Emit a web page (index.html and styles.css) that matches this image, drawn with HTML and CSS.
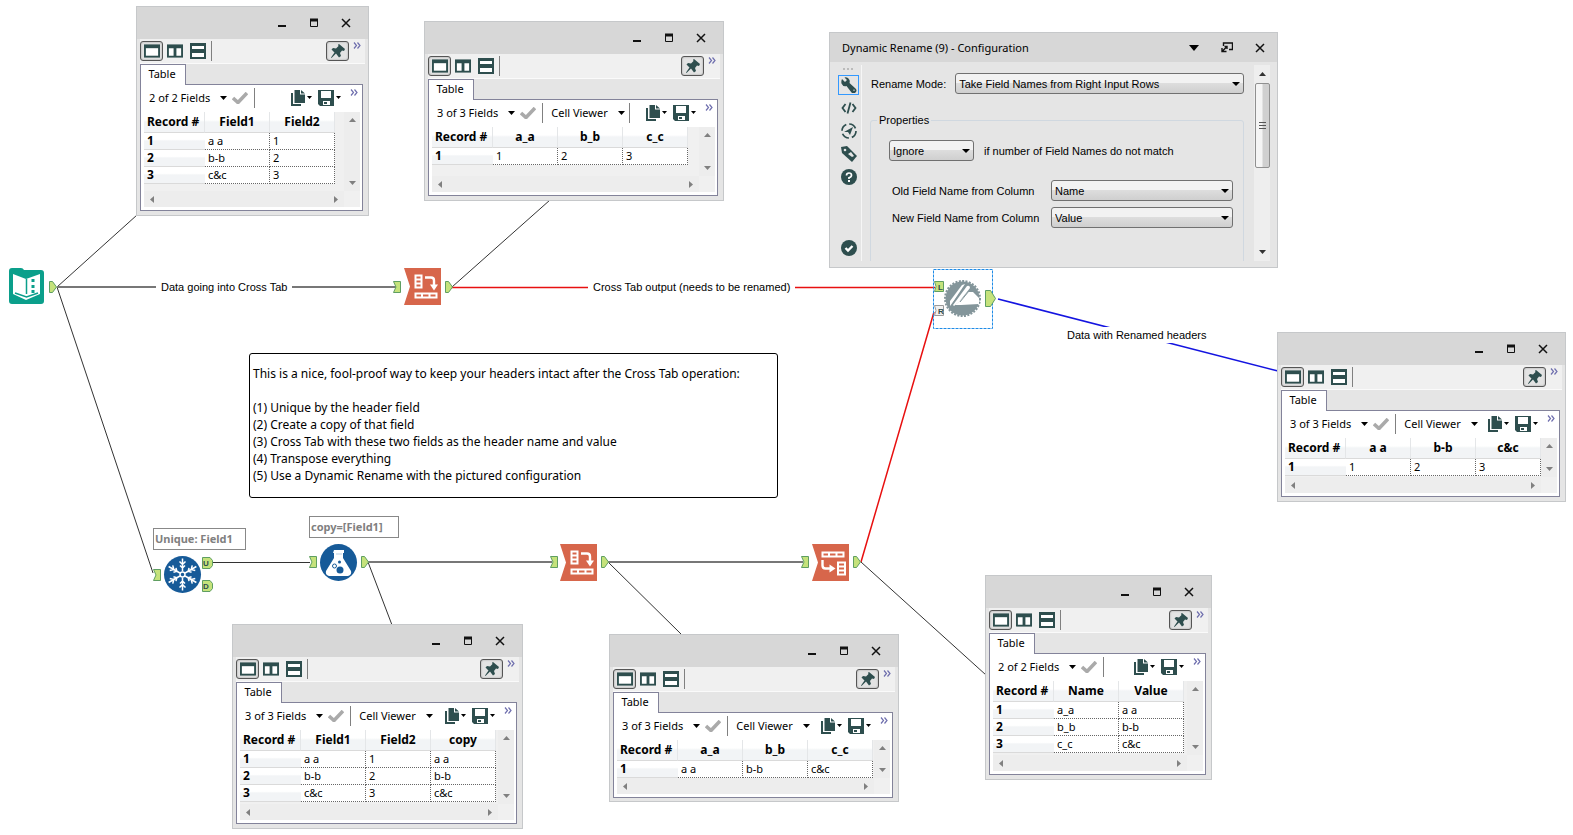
FILE: index.html
```html
<!DOCTYPE html>
<html lang="en">
<head>
    <meta charset="UTF-8">
    <meta name="viewport" content="width=device-width, initial-scale=1.0">
    <title>Dynamic Rename workflow</title>
    <link rel="stylesheet" href="styles.css">
</head>
<body>
    <!-- Shared icons -->
    <svg class="sprite" aria-hidden="true">
        <symbol id="i-min" viewBox="0 0 10 10"><path d="M1 8h8" stroke="#111" stroke-width="2"/></symbol>
        <symbol id="i-max" viewBox="0 0 10 10"><path d="M1.500 1v7.500h7V1" fill="none" stroke="#111"/><path d="M1 2h8" stroke="#111" stroke-width="3"/></symbol>
        <symbol id="i-close" viewBox="0 0 10 10"><path d="M1 1l8 8M9 1l-8 8" stroke="#111" stroke-width="1.500"/></symbol>
        <symbol id="i-single" viewBox="0 0 17 14"><path d="M0 0h17v14H0z" fill="#2e4e4e"/><path d="M2 4h13v8H2z" fill="#fff"/></symbol>
        <symbol id="i-split" viewBox="0 0 17 14"><path d="M0 0h17v14H0z" fill="#2e4e4e"/><path d="M2 4h5v8H2zM10 4h5v8h-5z" fill="#fff"/></symbol>
        <symbol id="i-stack" viewBox="0 0 16 16"><path d="M0 0h16v16H0z" fill="#2e4e4e"/><path d="M2 3h12v3H2zM2 10h12v4H2z" fill="#fff"/></symbol>
        <symbol id="i-pin" viewBox="0 0 16 16"><path d="M9 1l6 5-1 2-2-.5-2 2.500 1 3-2 1.500-3-4L1.500 15 1 14.500l3.500-5-3-3L3 5l3 .5L8.500 3 8 1.700z" fill="#2e4e4e"/></symbol>
        <symbol id="i-more" viewBox="0 0 8 7"><path d="M1 .5l2.500 3L1 6.500M4.500.5l2.500 3-2.500 3" fill="none" stroke="#6f6fae" stroke-width="1.200"/></symbol>
        <symbol id="i-caret" viewBox="0 0 7 4"><path d="M0 0h7L3.500 4z"/></symbol>
        <symbol id="i-check" viewBox="0 0 16 12"><path d="M1 6l5 4.500L15 1" fill="none" stroke="#aaa" stroke-width="3.600"/></symbol>
        <symbol id="i-copy" viewBox="0 0 14 16"><path d="M0 3h2v11h8v2H0z" fill="#2e4e4e"/><path d="M3.500 0H9v4.500h5V13H3.500zM10 0l4 3.500h-4z" fill="#2e4e4e"/></symbol>
        <symbol id="i-save" viewBox="0 0 16 16"><path d="M0 0h16v16H2l-2-2z" fill="#2e4e4e"/><path d="M3 1h10v7H3zM5 11h7v4H5z" fill="#fff"/><path d="M6 12h3v2H6z" fill="#2e4e4e"/></symbol>
        <symbol id="i-up" viewBox="0 0 7 4"><path d="M0 4h7L3.500 0z"/></symbol>
        <symbol id="i-left" viewBox="0 0 4 7"><path d="M4 0v7L0 3.500z"/></symbol>
        <symbol id="i-right" viewBox="0 0 4 7"><path d="M0 0v7l4-3.500z"/></symbol>

        <symbol id="port-in" viewBox="0 0 8 12"><path d="M.5.5h7v11h-7L3 6z" fill="#c5e27b" stroke="#5f9e62"/></symbol>
        <symbol id="port-out" viewBox="0 0 8 12"><path d="M.5.5h3L7.500 6l-4 5.500h-3z" fill="#c5e27b" stroke="#5f9e62"/></symbol>
        <symbol id="port-tag" viewBox="0 0 11 12"><path d="M.5.5H8L10.500 3.500v5L8 11.500H.5z" fill="#c5e27b" stroke="#5f9e62"/></symbol>
        <symbol id="tool-crosstab" viewBox="0 0 37 37">
            <path d="M0 0h37v37H0l6-18.500z" fill="#d7664b"/>
            <path d="M11.500 7.500h6v12h-6zM11.500 11.500h6M11.500 15.500h6M11.500 25.500h21v4h-21zM18 25.500v4M25.500 25.500v4" fill="none" stroke="#fff" stroke-width="2"/>
            <path d="M21 9.500h6q3 0 3 3V17" fill="none" stroke="#fff" stroke-width="2.400"/><path d="M26 16.500h8L30 22.500z" fill="#fff"/>
        </symbol>
        <symbol id="tool-transpose" viewBox="0 0 37 37">
            <path d="M0 0h37v37H0l6-18.500z" fill="#d7664b"/>
            <path d="M10.500 8.500h21v4h-21zM17 8.500v4M24.500 8.500v4M26 18.500h7v12h-7zM26 22.500h7M26 26.500h7" fill="none" stroke="#fff" stroke-width="2"/>
            <path d="M10.500 16v5.500q0 3 3 3H18" fill="none" stroke="#fff" stroke-width="2.400"/><path d="M17.500 20.500v8l6-4z" fill="#fff"/>
        </symbol>
    </svg>

    <main class="canvas">
        <svg class="flow" role="img" aria-label="Workflow connections and tools">
            <g class="wire">
                <path d="M57 287L137 215M57 287l96 286M452 287l98-87M368 562l24 63M608 562l73 72M861 562l125 113"/>
                <path class="thick" d="M57 287h340M368 562h184M608 562h195"/>
                <path class="plain" d="M211 562.500h99"/>
                <path class="red" d="M452 287.500h483M861 562l73-250"/>
                <path class="blue" d="M998 299l280 72"/>
            </g>

            <!-- Input data -->
            <path d="M9 271q0-3 3-3h9q2 0 3 2h17q3 0 3 3v28q0 3-3 3H12q-3 0-3-3z" fill="#0b9f8b"/>
            <path d="M13 274l13 5 14-5v20l-14 6-13-6z" fill="#fff"/>
            <path d="M26.500 279v15M15 293l11.500 4L38 293" fill="none" stroke="#0b9f8b" stroke-width="1.500"/>
            <path d="M33 279v3M33 285v3M33 290v3" stroke="#0b9f8b" stroke-width="3"/>
            <use href="#port-out" x="49" y="281" width="8" height="12"/>

            <use href="#port-in" x="393" y="281" width="8" height="12"/>
            <use href="#tool-crosstab" x="404" y="268" width="37" height="37"/>
            <use href="#port-out" x="445" y="281" width="8" height="12"/>

            <!-- Unique -->
            <use href="#port-in" x="153" y="569" width="8" height="12"/>
            <circle cx="182.500" cy="574.500" r="18.500" fill="#165a98"/>
            <g transform="translate(182.500 574.500)" fill="none" stroke="#fff" stroke-width="1.500">
                <g id="arm"><path d="M0-3v-13M-3-13L0-10l3-3M-2.500-9L0-6.500 2.500-9"/></g>
                <use href="#arm" transform="rotate(60)"/>
                <use href="#arm" transform="rotate(120)"/>
                <use href="#arm" transform="rotate(180)"/>
                <use href="#arm" transform="rotate(240)"/>
                <use href="#arm" transform="rotate(300)"/>
                <circle r="2.500"/>
            </g>
            <use href="#port-tag" x="202" y="557" width="11" height="12"/>
            <use href="#port-tag" x="202" y="580" width="11" height="12"/>
            <text x="203" y="566">U</text>
            <text x="203" y="589">D</text>

            <!-- Formula -->
            <use href="#port-in" x="309" y="556" width="8" height="12"/>
            <circle cx="338.500" cy="562.500" r="18.500" fill="#165a98"/>
            <path d="M334 550h10v3h-1v5l8 13q1 4-3 5h-19q-4-1-3-5l8-13v-5h-1z" fill="#fff"/>
            <path d="M336 554h6" stroke="#b9cfe2" stroke-width="1"/>
            <circle cx="340" cy="570" r="3.500" fill="#165a98"/>
            <circle cx="334.500" cy="566" r="2" fill="#fff" stroke="#165a98"/>
            <circle cx="339.500" cy="562" r="1.500" fill="#165a98"/>
            <use href="#port-out" x="361" y="556" width="8" height="12"/>

            <use href="#port-in" x="550" y="556" width="8" height="12"/>
            <use href="#tool-crosstab" x="560" y="544" width="37" height="37"/>
            <use href="#port-out" x="601" y="556" width="8" height="12"/>

            <use href="#port-in" x="801" y="556" width="8" height="12"/>
            <use href="#tool-transpose" x="812" y="544" width="37" height="37"/>
            <use href="#port-out" x="853" y="556" width="8" height="12"/>

            <!-- Dynamic rename, selected -->
            <rect x="933.500" y="269.500" width="59" height="59" fill="none" stroke="#1e8be6" stroke-dasharray="3 1"/>
            <path d="M934.500 281.500h9v10h-9q3-5 0-10z" fill="#c5e27b" stroke="#5f9e62"/>
            <path d="M934.500 305.500h9v10h-9q3-5 0-10z" fill="#f0f0f0" stroke="#999"/>
            <text x="938" y="290">L</text>
            <text x="938" y="314">R</text>
            <circle cx="962.500" cy="298.500" r="17" fill="#83959a"/>
            <circle cx="962.500" cy="298.500" r="17.500" fill="none" stroke="#83959a" stroke-width="2" stroke-dasharray="2 1.400"/>
            <path d="M968 292h5l6 6v6l-18 1h-6l6-5z" fill="#fff"/>
            <path d="M950 301l12-16 3-1-12 18-3 4z" fill="#fff"/>
            <path d="M953 305l14-19q3-1 3 2l-11 14-5 4z" fill="#fff"/>
            <path d="M953 303l13-18M960 302l9-11" stroke="#83959a" fill="none"/>
            <path d="M985.500 290.500h5l5 8-5 8h-5z" fill="#c5e27b" stroke="#5f9e62"/>
        </svg>

        <p class="wire-label label-crosstab">Data going into Cross Tab</p>
        <p class="wire-label label-output">Cross Tab output (needs to be renamed)</p>
        <p class="wire-label label-renamed">Data with Renamed headers</p>
        <p class="annotation note-unique">Unique: Field1</p>
        <p class="annotation note-copy">copy=[Field1]</p>

        <section class="comment">
            <p>This is a nice, fool-proof way to keep your headers intact after the Cross Tab operation:</p>
            <ul>
                <li>(1) Unique by the header field</li>
                <li>(2) Create a copy of that field</li>
                <li>(3) Cross Tab with these two fields as the header name and value</li>
                <li>(4) Transpose everything</li>
                <li>(5) Use a Dynamic Rename with the pictured configuration</li>
            </ul>
        </section>

        <!-- Source data -->
        <section class="window win-source">
            <header class="titlebar">
                <button aria-label="Minimize"><svg><use href="#i-min"/></svg></button>
                <button aria-label="Maximize"><svg><use href="#i-max"/></svg></button>
                <button aria-label="Close"><svg><use href="#i-close"/></svg></button>
            </header>
            <div class="toolbar">
                <button class="pressed" aria-label="Single"><svg><use href="#i-single"/></svg></button>
                <button aria-label="Side by side"><svg><use href="#i-split"/></svg></button>
                <button aria-label="Stacked"><svg><use href="#i-stack"/></svg></button>
                <span class="sep"></span>
                <button class="pressed pin" aria-label="Pin"><svg><use href="#i-pin"/></svg></button>
                <button class="more" aria-label="More"><svg><use href="#i-more"/></svg></button>
            </div>
            <button class="tab">Table</button>
            <div class="panel">
                <div class="fieldbar">
                    <button class="drop">2 of 2 Fields <svg class="caret"><use href="#i-caret"/></svg></button>
                    <svg class="check"><use href="#i-check"/></svg>
                    <span class="sep"></span>
                    <button class="copy" aria-label="Copy"><svg><use href="#i-copy"/></svg><svg class="mini"><use href="#i-caret"/></svg></button>
                    <button class="save" aria-label="Save"><svg><use href="#i-save"/></svg><svg class="mini"><use href="#i-caret"/></svg></button>
                    <button class="more" aria-label="More"><svg><use href="#i-more"/></svg></button>
                </div>
                <div class="grid">
                    <div class="sheet">
                        <table>
                            <tr><th>Record #</th><th>Field1</th><th>Field2</th></tr>
                            <tr><th>1</th><td>a a</td><td>1</td></tr>
                            <tr><th>2</th><td>b-b</td><td>2</td></tr>
                            <tr><th>3</th><td>c&amp;c</td><td>3</td></tr>
                        </table>
                    </div>
                    <div class="vscroll"><svg><use href="#i-up"/></svg><svg><use href="#i-caret"/></svg></div>
                    <div class="hscroll"><svg><use href="#i-left"/></svg><svg><use href="#i-right"/></svg></div>
                </div>
            </div>
        </section>

        <!-- Cross tab result -->
        <section class="window win-crosstab">
            <header class="titlebar">
                <button aria-label="Minimize"><svg><use href="#i-min"/></svg></button>
                <button aria-label="Maximize"><svg><use href="#i-max"/></svg></button>
                <button aria-label="Close"><svg><use href="#i-close"/></svg></button>
            </header>
            <div class="toolbar">
                <button class="pressed" aria-label="Single"><svg><use href="#i-single"/></svg></button>
                <button aria-label="Side by side"><svg><use href="#i-split"/></svg></button>
                <button aria-label="Stacked"><svg><use href="#i-stack"/></svg></button>
                <span class="sep"></span>
                <button class="pressed pin" aria-label="Pin"><svg><use href="#i-pin"/></svg></button>
                <button class="more" aria-label="More"><svg><use href="#i-more"/></svg></button>
            </div>
            <button class="tab">Table</button>
            <div class="panel">
                <div class="fieldbar">
                    <button class="drop">3 of 3 Fields <svg class="caret"><use href="#i-caret"/></svg></button>
                    <svg class="check"><use href="#i-check"/></svg>
                    <span class="sep"></span>
                    <button class="drop viewer">Cell Viewer <svg class="caret"><use href="#i-caret"/></svg></button>
                    <span class="sep end"></span>
                    <button class="copy" aria-label="Copy"><svg><use href="#i-copy"/></svg><svg class="mini"><use href="#i-caret"/></svg></button>
                    <button class="save" aria-label="Save"><svg><use href="#i-save"/></svg><svg class="mini"><use href="#i-caret"/></svg></button>
                    <button class="more" aria-label="More"><svg><use href="#i-more"/></svg></button>
                </div>
                <div class="grid">
                    <div class="sheet">
                        <table>
                            <tr><th>Record #</th><th>a_a</th><th>b_b</th><th>c_c</th></tr>
                            <tr><th>1</th><td>1</td><td>2</td><td>3</td></tr>
                        </table>
                    </div>
                    <div class="vscroll"><svg><use href="#i-up"/></svg><svg><use href="#i-caret"/></svg></div>
                    <div class="hscroll"><svg><use href="#i-left"/></svg><svg><use href="#i-right"/></svg></div>
                </div>
            </div>
        </section>

        <!-- Renamed result -->
        <section class="window win-renamed">
            <header class="titlebar">
                <button aria-label="Minimize"><svg><use href="#i-min"/></svg></button>
                <button aria-label="Maximize"><svg><use href="#i-max"/></svg></button>
                <button aria-label="Close"><svg><use href="#i-close"/></svg></button>
            </header>
            <div class="toolbar">
                <button class="pressed" aria-label="Single"><svg><use href="#i-single"/></svg></button>
                <button aria-label="Side by side"><svg><use href="#i-split"/></svg></button>
                <button aria-label="Stacked"><svg><use href="#i-stack"/></svg></button>
                <span class="sep"></span>
                <button class="pressed pin" aria-label="Pin"><svg><use href="#i-pin"/></svg></button>
                <button class="more" aria-label="More"><svg><use href="#i-more"/></svg></button>
            </div>
            <button class="tab">Table</button>
            <div class="panel">
                <div class="fieldbar">
                    <button class="drop">3 of 3 Fields <svg class="caret"><use href="#i-caret"/></svg></button>
                    <svg class="check"><use href="#i-check"/></svg>
                    <span class="sep"></span>
                    <button class="drop viewer">Cell Viewer <svg class="caret"><use href="#i-caret"/></svg></button>
                    <button class="copy" aria-label="Copy"><svg><use href="#i-copy"/></svg><svg class="mini"><use href="#i-caret"/></svg></button>
                    <button class="save" aria-label="Save"><svg><use href="#i-save"/></svg><svg class="mini"><use href="#i-caret"/></svg></button>
                    <button class="more" aria-label="More"><svg><use href="#i-more"/></svg></button>
                </div>
                <div class="grid">
                    <div class="sheet">
                        <table>
                            <tr><th>Record #</th><th>a a</th><th>b-b</th><th>c&amp;c</th></tr>
                            <tr><th>1</th><td>1</td><td>2</td><td>3</td></tr>
                        </table>
                    </div>
                    <div class="vscroll"><svg><use href="#i-up"/></svg><svg><use href="#i-caret"/></svg></div>
                    <div class="hscroll"><svg><use href="#i-left"/></svg><svg><use href="#i-right"/></svg></div>
                </div>
            </div>
        </section>

        <!-- Copied field -->
        <section class="window win-copy">
            <header class="titlebar">
                <button aria-label="Minimize"><svg><use href="#i-min"/></svg></button>
                <button aria-label="Maximize"><svg><use href="#i-max"/></svg></button>
                <button aria-label="Close"><svg><use href="#i-close"/></svg></button>
            </header>
            <div class="toolbar">
                <button class="pressed" aria-label="Single"><svg><use href="#i-single"/></svg></button>
                <button aria-label="Side by side"><svg><use href="#i-split"/></svg></button>
                <button aria-label="Stacked"><svg><use href="#i-stack"/></svg></button>
                <span class="sep"></span>
                <button class="pressed pin" aria-label="Pin"><svg><use href="#i-pin"/></svg></button>
                <button class="more" aria-label="More"><svg><use href="#i-more"/></svg></button>
            </div>
            <button class="tab">Table</button>
            <div class="panel">
                <div class="fieldbar">
                    <button class="drop">3 of 3 Fields <svg class="caret"><use href="#i-caret"/></svg></button>
                    <svg class="check"><use href="#i-check"/></svg>
                    <span class="sep"></span>
                    <button class="drop viewer">Cell Viewer <svg class="caret"><use href="#i-caret"/></svg></button>
                    <button class="copy" aria-label="Copy"><svg><use href="#i-copy"/></svg><svg class="mini"><use href="#i-caret"/></svg></button>
                    <button class="save" aria-label="Save"><svg><use href="#i-save"/></svg><svg class="mini"><use href="#i-caret"/></svg></button>
                    <button class="more" aria-label="More"><svg><use href="#i-more"/></svg></button>
                </div>
                <div class="grid">
                    <div class="sheet">
                        <table>
                            <tr><th>Record #</th><th>Field1</th><th>Field2</th><th>copy</th></tr>
                            <tr><th>1</th><td>a a</td><td>1</td><td>a a</td></tr>
                            <tr><th>2</th><td>b-b</td><td>2</td><td>b-b</td></tr>
                            <tr><th>3</th><td>c&amp;c</td><td>3</td><td>c&amp;c</td></tr>
                        </table>
                    </div>
                    <div class="vscroll"><svg><use href="#i-up"/></svg><svg><use href="#i-caret"/></svg></div>
                    <div class="hscroll"><svg><use href="#i-left"/></svg><svg><use href="#i-right"/></svg></div>
                </div>
            </div>
        </section>

        <!-- Header lookup -->
        <section class="window win-headers">
            <header class="titlebar">
                <button aria-label="Minimize"><svg><use href="#i-min"/></svg></button>
                <button aria-label="Maximize"><svg><use href="#i-max"/></svg></button>
                <button aria-label="Close"><svg><use href="#i-close"/></svg></button>
            </header>
            <div class="toolbar">
                <button class="pressed" aria-label="Single"><svg><use href="#i-single"/></svg></button>
                <button aria-label="Side by side"><svg><use href="#i-split"/></svg></button>
                <button aria-label="Stacked"><svg><use href="#i-stack"/></svg></button>
                <span class="sep"></span>
                <button class="pressed pin" aria-label="Pin"><svg><use href="#i-pin"/></svg></button>
                <button class="more" aria-label="More"><svg><use href="#i-more"/></svg></button>
            </div>
            <button class="tab">Table</button>
            <div class="panel">
                <div class="fieldbar">
                    <button class="drop">3 of 3 Fields <svg class="caret"><use href="#i-caret"/></svg></button>
                    <svg class="check"><use href="#i-check"/></svg>
                    <span class="sep"></span>
                    <button class="drop viewer">Cell Viewer <svg class="caret"><use href="#i-caret"/></svg></button>
                    <button class="copy" aria-label="Copy"><svg><use href="#i-copy"/></svg><svg class="mini"><use href="#i-caret"/></svg></button>
                    <button class="save" aria-label="Save"><svg><use href="#i-save"/></svg><svg class="mini"><use href="#i-caret"/></svg></button>
                    <button class="more" aria-label="More"><svg><use href="#i-more"/></svg></button>
                </div>
                <div class="grid">
                    <div class="sheet">
                        <table>
                            <tr><th>Record #</th><th>a_a</th><th>b_b</th><th>c_c</th></tr>
                            <tr><th>1</th><td>a a</td><td>b-b</td><td>c&amp;c</td></tr>
                        </table>
                    </div>
                    <div class="vscroll"><svg><use href="#i-up"/></svg><svg><use href="#i-caret"/></svg></div>
                    <div class="hscroll"><svg><use href="#i-left"/></svg><svg><use href="#i-right"/></svg></div>
                </div>
            </div>
        </section>

        <!-- Transposed names -->
        <section class="window win-transposed">
            <header class="titlebar">
                <button aria-label="Minimize"><svg><use href="#i-min"/></svg></button>
                <button aria-label="Maximize"><svg><use href="#i-max"/></svg></button>
                <button aria-label="Close"><svg><use href="#i-close"/></svg></button>
            </header>
            <div class="toolbar">
                <button class="pressed" aria-label="Single"><svg><use href="#i-single"/></svg></button>
                <button aria-label="Side by side"><svg><use href="#i-split"/></svg></button>
                <button aria-label="Stacked"><svg><use href="#i-stack"/></svg></button>
                <span class="sep"></span>
                <button class="pressed pin" aria-label="Pin"><svg><use href="#i-pin"/></svg></button>
                <button class="more" aria-label="More"><svg><use href="#i-more"/></svg></button>
            </div>
            <button class="tab">Table</button>
            <div class="panel">
                <div class="fieldbar">
                    <button class="drop">2 of 2 Fields <svg class="caret"><use href="#i-caret"/></svg></button>
                    <svg class="check"><use href="#i-check"/></svg>
                    <span class="sep"></span>
                    <button class="copy" aria-label="Copy"><svg><use href="#i-copy"/></svg><svg class="mini"><use href="#i-caret"/></svg></button>
                    <button class="save" aria-label="Save"><svg><use href="#i-save"/></svg><svg class="mini"><use href="#i-caret"/></svg></button>
                    <button class="more" aria-label="More"><svg><use href="#i-more"/></svg></button>
                </div>
                <div class="grid">
                    <div class="sheet">
                        <table>
                            <tr><th>Record #</th><th>Name</th><th>Value</th></tr>
                            <tr><th>1</th><td>a_a</td><td>a a</td></tr>
                            <tr><th>2</th><td>b_b</td><td>b-b</td></tr>
                            <tr><th>3</th><td>c_c</td><td>c&amp;c</td></tr>
                        </table>
                    </div>
                    <div class="vscroll"><svg><use href="#i-up"/></svg><svg><use href="#i-caret"/></svg></div>
                    <div class="hscroll"><svg><use href="#i-left"/></svg><svg><use href="#i-right"/></svg></div>
                </div>
            </div>
        </section>

        <!-- Tool configuration -->
        <section class="window win-config">
            <header class="titlebar">
                <h2>Dynamic Rename (9) - Configuration</h2>
                <button aria-label="Options"><svg viewBox="0 0 10 10"><path d="M0 2h10L5 8z"/></svg></button>
                <button aria-label="Dock"><svg class="dock" viewBox="0 0 12 11"><path d="M2.500 4V1h9v6.500H8M1 9.500l5-5M1 6v3.500h4.500M3.500 4.500H6V7" fill="none" stroke="#111" stroke-width="1.400"/></svg></button>
                <button aria-label="Close"><svg><use href="#i-close"/></svg></button>
            </header>
            <div class="config-body">
                <nav class="side">
                    <span class="grip"></span>
                    <button class="active" aria-label="Configuration"><svg viewBox="0 0 16 16"><path d="M1 2l3 3 2-2-2.500-2.500Q7-.5 8.500 3q.5 1.500 0 3l6 5.500q2 2 0 4t-4 0L5.500 9Q2 10 .5 6.500 0 4 1 2zM12.500 12.500v1.500h1v-1.500z" fill="#2e4e4e"/></svg></button>
                    <button aria-label="XML"><svg viewBox="0 0 16 16"><path d="M4.500 4L1.500 8l3 4M11.500 4l3 4-3 4M9.500 2.500l-3 11" fill="none" stroke="#2e4e4e" stroke-width="1.800"/></svg></button>
                    <button aria-label="Navigation"><svg viewBox="0 0 16 16"><circle cx="8" cy="8" r="7" fill="none" stroke="#2e4e4e" stroke-width="1.700" stroke-dasharray="8 3"/><path d="M3 9l9-5-3 8-2-3z" fill="#2e4e4e"/></svg></button>
                    <button aria-label="Annotation"><svg viewBox="0 0 16 16"><path d="M0 1l6-1 10 10-5 6L1 7z" fill="#2e4e4e"/><circle cx="4" cy="4" r="1.300" fill="#e7e7e7"/><path d="M7 8l3-2 3 4-2 1z" fill="#e7e7e7"/></svg></button>
                    <button aria-label="Help"><svg viewBox="0 0 16 16"><circle cx="8" cy="8" r="8" fill="#2e4e4e"/><path d="M5.500 6.500Q5.500 4 8 4t2.500 2.200Q10.500 8 8 8.700V10" fill="none" stroke="#fff" stroke-width="1.700"/><path d="M7 11h2v2H7z" fill="#fff"/></svg></button>
                    <button class="apply" aria-label="Apply"><svg viewBox="0 0 16 16"><circle cx="8" cy="8" r="8" fill="#2e4e4e"/><path d="M4.500 8l2.500 2.500L11.500 6" fill="none" stroke="#fff" stroke-width="2.400"/></svg></button>
                </nav>
                <form class="settings">
                    <div class="mode">
                        <label for="mode">Rename Mode:</label>
                        <span class="select"><select id="mode"><option>Take Field Names from Right Input Rows</option></select></span>
                    </div>
                    <fieldset>
                        <legend>Properties</legend>
                        <div class="mismatch">
                            <span class="select"><select id="mismatch"><option>Ignore</option></select></span>
                            <label for="mismatch">if number of Field Names do not match</label>
                        </div>
                        <div class="row">
                            <label for="oldName">Old Field Name from Column</label>
                            <span class="select"><select id="oldName"><option>Name</option></select></span>
                        </div>
                        <div class="row">
                            <label for="newName">New Field Name from Column</label>
                            <span class="select"><select id="newName"><option>Value</option></select></span>
                        </div>
                    </fieldset>
                </form>
                <div class="scrollbar">
                    <svg><use href="#i-up"/></svg>
                    <span class="thumb"></span>
                    <svg><use href="#i-caret"/></svg>
                </div>
            </div>
        </section>
    </main>
</body>
</html>
```

FILE: styles.css
```css
* {
    box-sizing: border-box;
}

body {
    margin: 0;
    background: #fff;
    color: #000;
    font-family: "Noto Sans", "Open Sans", sans-serif;
    font-size: 11px;
}

p, ul, h2 {
    margin: 0;
    padding: 0;
}

button {
    display: flex;
    align-items: center;
    justify-content: center;
    padding: 0;
    border: 0;
    background: none;
    color: inherit;
    font: inherit;
}

.sprite {
    position: absolute;
    width: 0;
    height: 0;
}

.canvas {
    position: relative;
    min-height: 100vh;
    overflow: hidden;
}

.flow {
    position: absolute;
    width: 100%;
    height: 100%;
}

.flow text {
    font: bold 8px "Liberation Sans", sans-serif;
    fill: #2e4e4e;
}

.wire path {
    fill: none;
    stroke: #333;
    stroke-width: 1;
}

.wire .thick {
    stroke: #777;
    stroke-width: 2;
}

.wire .red {
    stroke: #e81010;
    stroke-width: 1.5;
}

.wire .blue {
    stroke: #1414e0;
    stroke-width: 1.5;
}

/* Text on the canvas */
.wire-label {
    position: absolute;
    padding: 0 5px;
    background: #fff;
    font-family: "Liberation Sans", Arial, sans-serif;
    font-size: 11px;
    line-height: 16px;
    white-space: nowrap;
}

.label-crosstab { left: 156px; top: 279px; }
.label-output { left: 588px; top: 279px; }
.label-renamed { left: 1062px; top: 327px; }

.annotation {
    position: absolute;
    height: 22px;
    padding: 0 1px;
    border: 1px solid #888;
    background: #fff;
    color: #808080;
    font-weight: bold;
    font-size: 11px;
    line-height: 20px;
    white-space: nowrap;
}

.note-unique { left: 153px; top: 528px; width: 93px; }
.note-copy { left: 309px; top: 516px; width: 90px; }

.comment {
    position: absolute;
    left: 249px;
    top: 353px;
    width: 529px;
    padding: 11px 3px 13px;
    border: 1px solid #000;
    border-radius: 3px;
    background: #fff;
    font-size: 12px;
    line-height: 17px;
    white-space: nowrap;
}

.comment ul {
    margin-top: 17px;
    list-style: none;
}

/* Windows */
.window {
    position: absolute;
    display: flex;
    flex-direction: column;
    padding: 0 3px 4px;
    border: 1px solid #c6c8ca;
    background: #e5e5e5;
}

.win-source { left: 136px; top: 6px; width: 233px; height: 210px; }
.win-crosstab { left: 424px; top: 21px; width: 300px; height: 180px; }
.win-renamed { left: 1277px; top: 332px; width: 289px; height: 170px; }
.win-copy { left: 232px; top: 624px; width: 291px; height: 205px; }
.win-headers { left: 609px; top: 634px; width: 290px; height: 168px; }
.win-transposed { left: 985px; top: 575px; width: 227px; height: 205px; }
.win-config { left: 829px; top: 32px; width: 449px; height: 236px; }

.titlebar {
    display: flex;
    flex: none;
    justify-content: flex-end;
    height: 32px;
    margin: 0 -3px;
    padding-right: 6px;
    background: #d7d7d7;
}

.titlebar button {
    width: 32px;
}

.titlebar svg {
    width: 10px;
    height: 10px;
}

.toolbar {
    display: flex;
    flex: none;
    height: 25px;
    padding-top: 2px;
    border-bottom: 1px solid #fafafa;
    background: #f0f0f0;
}

.toolbar button {
    width: 23px;
    height: 20px;
}

.toolbar svg {
    width: 16px;
    height: 16px;
}

.toolbar .pressed {
    border: 1px solid #555;
    border-radius: 3px;
    background: #e3e3e3;
    box-shadow: inset 0 0 2px #999;
}

.toolbar .pin {
    margin-left: auto;
}

.toolbar .more {
    width: 16px;
    height: 8px;
}

.toolbar .more svg, .more svg {
    width: 8px;
    height: 7px;
}

.sep {
    width: 1px;
    height: 20px;
    margin-left: 2px;
    background: #808080;
}

.tab {
    z-index: 1;
    flex: none;
    width: 46px;
    height: 21px;
    margin-bottom: -1px;
    padding: 0 2px 3px 0;
    border: 1px solid #83839a;
    border-bottom: 0;
    background: #fff;
}

.panel {
    display: flex;
    flex: 1;
    flex-direction: column;
    margin-right: 2px;
    padding: 0 2px 3px 3px;
    border: 1px solid #83839a;
    background: #fff;
}

.fieldbar {
    display: flex;
    align-items: center;
    height: 27px;
    padding: 0 0 2px 5px;
    white-space: nowrap;
}

.drop {
    gap: 10px;
    font-size: 11px;
}

.caret {
    width: 7px;
    height: 4px;
}

.check {
    width: 16px;
    height: 12px;
    margin: 0 4px 0 5px;
}

.viewer {
    margin-left: 8px;
}

.end {
    margin-left: 4px;
}

.copy, .save {
    gap: 2px;
    margin-left: auto;
}

.copy svg {
    width: 14px;
    height: 16px;
}

.save {
    margin-left: 6px;
}

.save svg {
    width: 16px;
    height: 16px;
}

.fieldbar .mini {
    width: 5px;
    height: 3px;
}

.fieldbar .more {
    align-self: flex-start;
    margin: 4px 2px 0 9px;
}

.grid {
    display: grid;
    flex: 1;
    grid-template: 1fr 16px / 1fr 16px;
    background: #f0f0f0;
}

.sheet {
    overflow: hidden;
}

table {
    table-layout: fixed;
    width: 0;
    border-spacing: 0;
    line-height: 16px;
}

th, td {
    width: 65px;
    height: 17px;
    padding: 0 2px;
    background: #fff;
    text-align: left;
    white-space: nowrap;
}

td {
    padding-left: 3px;
    border-right: 1px dotted #666;
    border-bottom: 1px dotted #666;
}

th {
    border-bottom: 1px solid #dadada;
    background: linear-gradient(#fff 40%, #f2f4f6 50%);
    font-size: 12px;
    font-weight: bold;
}

th:first-child {
    width: 61px;
    padding-left: 3px;
}

tr:first-child th {
    height: 21px;
    border-right: 1px solid #e4e6e8;
    text-align: center;
}

tr:first-child th:first-child {
    text-align: left;
}

.vscroll, .hscroll {
    display: flex;
    align-items: center;
    justify-content: space-between;
    background: #ededed;
}

.vscroll {
    flex-direction: column;
    padding: 6px 0;
}

.hscroll {
    padding: 0 6px;
}

.vscroll svg, .scrollbar svg {
    width: 7px;
    height: 4px;
    fill: #808080;
}

.hscroll svg {
    width: 4px;
    height: 7px;
    fill: #808080;
}

/* Configuration window */
.win-config {
    font-family: "Liberation Sans", Arial, sans-serif;
}

.win-config .titlebar {
    height: 29px;
    margin-bottom: 3px;
    padding-right: 1px;
}

.titlebar h2 {
    flex: 1;
    padding-left: 12px;
    font-family: "Noto Sans", "Open Sans", sans-serif;
    font-size: 11px;
    font-weight: normal;
    line-height: 29px;
}

.win-config .titlebar button {
    width: 33px;
}

.titlebar .dock {
    width: 12px;
    height: 11px;
}

.config-body {
    display: flex;
    flex: 1;
    min-height: 0;
    padding: 0 4px 2px 5px;
}

.side {
    display: flex;
    flex-direction: column;
    gap: 3px;
    width: 24px;
    border-right: 1px solid #f6f6f6;
}

.side button {
    width: 21px;
    height: 20px;
}

.side svg {
    width: 16px;
    height: 16px;
}

.side .active {
    border: 1px solid #3399ff;
}

.side .apply {
    margin-top: auto;
    margin-bottom: 3px;
}

.grip {
    width: 11px;
    height: 2px;
    margin: 3px 5px 2px;
    background: repeating-linear-gradient(90deg, #bbb 0 2px, transparent 2px 4px);
}

.settings {
    flex: 1;
    overflow: hidden;
    padding: 8px 10px 0 9px;
}

.mode, .mismatch, .row {
    display: flex;
    align-items: center;
}

.mode {
    gap: 9px;
}

.mode .select {
    flex: 1;
}

.select {
    position: relative;
}

.select::after {
    content: "";
    position: absolute;
    top: 9px;
    right: 4px;
    border: 4px solid transparent;
    border-top-color: #000;
    border-bottom: 0;
}

select {
    display: block;
    width: 100%;
    height: 21px;
    padding: 0 3px;
    appearance: none;
    border: 1px solid #707070;
    border-radius: 3px;
    background: linear-gradient(#f2f2f2 45%, #dddddd 50%, #cfcfcf);
    color: #000;
    font: 11px "Liberation Sans", Arial, sans-serif;
}

fieldset {
    height: 160px;
    margin: 20px 0 0 -1px;
    padding: 13px 10px 0 18px;
    border: 1px solid #d0d8e0;
    border-radius: 3px;
}

legend {
    margin-left: -12px;
    padding: 0 2px;
    line-height: 13px;
}

.mismatch {
    gap: 10px;
    margin-bottom: 19px;
}

.mismatch .select {
    width: 85px;
}

.row {
    justify-content: space-between;
    margin-bottom: 6px;
    padding-left: 3px;
}

.row .select {
    width: 182px;
}

.scrollbar {
    display: flex;
    flex-direction: column;
    align-items: center;
    width: 16px;
    padding: 7px 0;
    background: #eee;
}

.scrollbar svg {
    fill: #333;
}

.thumb {
    width: 15px;
    height: 85px;
    margin: 7px 0 auto;
    border: 1px solid #909090;
    border-radius: 2px;
    background:
        repeating-linear-gradient(#555 0 1px, transparent 1px 3px) center / 7px 8px no-repeat,
        linear-gradient(90deg, #f5f5f5 45%, #d0d0d0 55%);
}
```
